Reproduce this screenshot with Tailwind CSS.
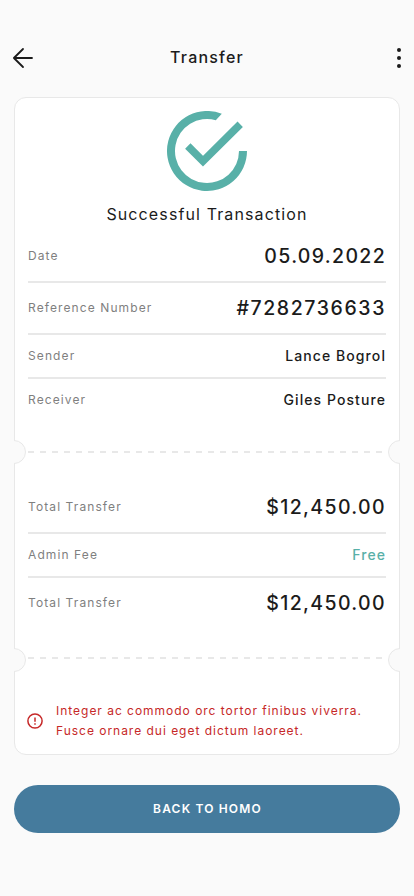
<!DOCTYPE html>
<html lang="en">
<head>
<meta charset="utf-8">
<meta name="viewport" content="width=device-width, initial-scale=1">
<title>Transfer</title>
<script src="https://cdn.jsdelivr.net/npm/@tailwindcss/browser@4"></script>
</head>
<body class="bg-[#fafafa]">
<div class="flex h-[896px] w-[414px] flex-col overflow-hidden bg-[#fafafa] px-[14px] pt-[44px] font-['Inter',sans-serif] text-[#1b1b1b]">
  <header class="flex h-7 items-center justify-between">
    <svg class="-ml-[3px] h-6 w-6" viewBox="0 0 24 24" fill="none" stroke="currentColor" stroke-width="1.8" stroke-linecap="round" stroke-linejoin="round"><path d="M21 12H2.9M12 3L2.9 12L12 21"/></svg>
    <h1 class="-mt-[2px] -ml-[8px] text-[16px] leading-6 font-medium tracking-[1.2px]">Transfer</h1>
    <svg class="-mr-[11px] h-6 w-6" viewBox="0 0 24 24" fill="currentColor"><circle cx="12" cy="4" r="2"/><circle cx="12" cy="12" r="2"/><circle cx="12" cy="20" r="2"/></svg>
  </header>
  <main class="relative mt-[25px] flex h-[658px] flex-col rounded-[12px] border border-[#e8e8e8] bg-white px-[13px] pt-[13px]">
    <svg class="h-20 w-20 self-center" viewBox="0 0 80 80" fill="#58b0a8"><path d="M80 40A40 40 0 1 1 54.8 2.8L48.8 9.2A32 32 0 1 0 72 40Z"/><path d="M20.8 35L36 50.2L73.2 13.3" fill="none" stroke="#58b0a8" stroke-width="7.6"/></svg>
    <h2 class="mt-[11px] text-center text-[16px] leading-6 tracking-[1.12px]">Successful Transaction</h2>
    <dl class="mt-[5px] text-[#7f7f7f]">
      <div class="flex h-[52px] items-center justify-between border-b-2 border-[#e8e8e8]"><dt class="text-[12px] tracking-[1.1px]">Date</dt><dd class="text-[19.5px] leading-[30px] font-medium tracking-[1.32px] text-[#1b1b1b]">05.09.2022</dd></div>
      <div class="flex h-[52px] items-center justify-between border-b-2 border-[#e8e8e8]"><dt class="text-[12px] tracking-[1.1px]">Reference Number</dt><dd class="text-[19.5px] leading-[30px] font-medium tracking-[1.6px] text-[#1b1b1b]">#7282736633</dd></div>
      <div class="flex h-[44px] items-center justify-between border-b-2 border-[#e8e8e8]"><dt class="text-[12px] tracking-[1.1px]">Sender</dt><dd class="-mt-px text-[14px] leading-5 font-medium tracking-[1.08px] text-[#1b1b1b]">Lance Bogrol</dd></div>
      <div class="flex h-[42px] items-center justify-between"><dt class="text-[12px] tracking-[1.1px]">Receiver</dt><dd class="-mt-px text-[14px] leading-5 font-medium tracking-[1.08px] text-[#1b1b1b]">Giles Posture</dd></div>
    </dl>
    <svg class="mt-[30px] h-[2px] w-full shrink-0" viewBox="0 0 358 2"><path d="M0 1H358" stroke="#e8e8e8" stroke-width="2" stroke-dasharray="6 6"/></svg>
    <dl class="mt-[29px] text-[#7f7f7f]">
      <div class="flex h-[52px] items-center justify-between border-b-2 border-[#e8e8e8]"><dt class="text-[12px] tracking-[1.1px]">Total Transfer</dt><dd class="text-[19.5px] leading-[30px] font-medium tracking-[1.36px] text-[#1b1b1b]">$12,450.00</dd></div>
      <div class="flex h-[44px] items-center justify-between border-b-2 border-[#e8e8e8]"><dt class="text-[12px] tracking-[1.1px]">Admin Fee</dt><dd class="-mt-px text-[14px] leading-5 font-medium tracking-[1.08px] text-[#58b0a8]">Free</dd></div>
      <div class="flex h-[50px] items-center justify-between"><dt class="text-[12px] tracking-[1.1px]">Total Transfer</dt><dd class="text-[19.5px] leading-[30px] font-medium tracking-[1.36px] text-[#1b1b1b]">$12,450.00</dd></div>
    </dl>
    <svg class="mt-[29px] h-[2px] w-full shrink-0" viewBox="0 0 358 2"><path d="M0 1H358" stroke="#e8e8e8" stroke-width="2" stroke-dasharray="6 6"/></svg>
    <div class="mt-[42px] flex items-center gap-[13px] text-[#c62828]">
      <svg class="-ml-px h-4 w-4 shrink-0" viewBox="0 0 16 16" fill="none" stroke="currentColor" stroke-width="1.5"><circle cx="8" cy="8" r="7.1"/><path d="M8 4.5V8.8M8 10.2V11.7"/></svg>
      <p class="text-[12px] leading-5 tracking-[.98px] whitespace-nowrap">Integer ac commodo orc tortor finibus viverra.<br>Fusce ornare dui eget dictum laoreet.</p>
    </div>
    <svg class="absolute top-[342px] -left-px h-6 w-3" viewBox="0 0 12 24"><path d="M0 .5A11.5 11.5 0 0 1 0 23.5" fill="#fafafa" stroke="#e8e8e8"/></svg>
    <svg class="absolute top-[342px] -right-px h-6 w-3" viewBox="0 0 12 24"><path d="M12 .5A11.5 11.5 0 0 0 12 23.5" fill="#fafafa" stroke="#e8e8e8"/></svg>
    <svg class="absolute top-[550px] -left-px h-6 w-3" viewBox="0 0 12 24"><path d="M0 .5A11.5 11.5 0 0 1 0 23.5" fill="#fafafa" stroke="#e8e8e8"/></svg>
    <svg class="absolute top-[550px] -right-px h-6 w-3" viewBox="0 0 12 24"><path d="M12 .5A11.5 11.5 0 0 0 12 23.5" fill="#fafafa" stroke="#e8e8e8"/></svg>
  </main>
  <button class="mt-[30px] h-12 w-full shrink-0 rounded-full bg-[#457b9d] pl-px text-[12px] font-semibold tracking-[1.17px] text-white">BACK TO HOMO</button>
</div>
</body>
</html>
